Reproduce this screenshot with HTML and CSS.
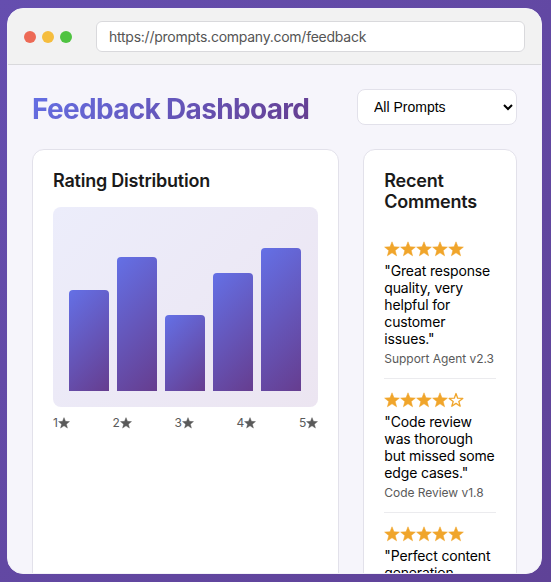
FILE: index.html
```html
<!DOCTYPE html>
<html lang="en">
<head>
<meta charset="utf-8">
<title>Feedback Dashboard</title>
<link rel="stylesheet" href="styles.css">
</head>
<body>
<svg class="defs" aria-hidden="true">
  <symbol id="star" viewBox="0 0 16 16"><path d="M8 .8 10 5.8 15.4 6.1 11.2 9.5 12.6 14.8 8 11.8 3.4 14.8 4.8 9.5 .6 6.1 6 5.8Z" fill="currentColor" stroke="currentColor" stroke-width=".5" stroke-linejoin="round"/></symbol>
  <symbol id="star-empty" viewBox="0 0 16 16"><path d="M8 1.5 9.7 6.2 14.8 6.4 10.8 9.5 12.2 14.2 8 11.4 3.8 14.2 5.2 9.5 1.2 6.4 6.3 6.2Z" fill="none" stroke="currentColor" stroke-width="1.3" stroke-linejoin="round"/></symbol>
</svg>
<div class="window">
  <header class="bar">
    <div class="dots"><i class="red"></i><i class="yellow"></i><i class="green"></i></div>
    <div class="url"><span>https://prompts.company.com/feedback</span></div>
  </header>
  <main class="content">
    <div class="top">
      <h1>Feedback Dashboard</h1>
      <select><option>All Prompts</option></select>
    </div>
    <div class="grid">
      <section class="card">
        <h3>Rating Distribution</h3>
        <div class="chart">
          <div class="col" style="height:60%"></div>
          <div class="col" style="height:80%"></div>
          <div class="col" style="height:45%"></div>
          <div class="col" style="height:70%"></div>
          <div class="col" style="height:85%"></div>
        </div>
        <div class="labels">
          <span>1<svg><use href="#star"/></svg></span>
          <span>2<svg><use href="#star"/></svg></span>
          <span>3<svg><use href="#star"/></svg></span>
          <span>4<svg><use href="#star"/></svg></span>
          <span>5<svg><use href="#star"/></svg></span>
        </div>
      </section>
      <section class="card">
        <h3>Recent Comments</h3>
        <article class="comment">
          <div class="stars"><svg><use href="#star"/></svg><svg><use href="#star"/></svg><svg><use href="#star"/></svg><svg><use href="#star"/></svg><svg><use href="#star"/></svg></div>
          <p>"Great response<br>quality, very<br>helpful for<br>customer<br>issues."</p>
          <small>Support Agent v2.3</small>
        </article>
        <article class="comment">
          <div class="stars"><svg><use href="#star"/></svg><svg><use href="#star"/></svg><svg><use href="#star"/></svg><svg><use href="#star"/></svg><svg><use href="#star-empty"/></svg></div>
          <p>"Code review<br>was thorough<br>but missed some<br>edge cases."</p>
          <small>Code Review v1.8</small>
        </article>
        <article class="comment">
          <div class="stars"><svg><use href="#star"/></svg><svg><use href="#star"/></svg><svg><use href="#star"/></svg><svg><use href="#star"/></svg><svg><use href="#star"/></svg></div>
          <p>"Perfect content<br>generation</p>
        </article>
      </section>
    </div>
  </main>
</div>
</body>
</html>
```
FILE: styles.css
```css
* { box-sizing: border-box; margin: 0; padding: 0; }
body {
  height: 582px;
  padding: 8px 9px 8px 7px;
  overflow: hidden;
  background: linear-gradient(135deg, #654eaf, #5f4297);
  font-family: Inter, "Liberation Sans", sans-serif;
}
.defs { display: none; }
.window {
  height: 566px;
  overflow: hidden;
  border: 1px solid #f3f2f8;
  border-radius: 16px;
  background: #f6f5fb;
}
.bar {
  display: flex;
  align-items: center;
  height: 56px;
  padding: 12px 16px;
  background: #f2f2f2;
  border-bottom: 1px solid #d9d9dc;
}
.dots { display: flex; gap: 6px; width: 72px; }
.dots i { width: 12px; height: 12px; border-radius: 50%; }
.red { background: #ed6a56; }
.yellow { background: #f5bd3e; }
.green { background: #4fc341; }
.url {
  flex: 1;
  height: 31px;
  padding: 0 12px;
  border: 1px solid #d9d9dc;
  border-radius: 6px;
  background: #fff;
  color: #555;
  font-size: 14px;
  line-height: 30px;
  letter-spacing: -0.25px;
}
.content { padding: 24px; }
.top { display: flex; justify-content: space-between; align-items: center; height: 36px; margin-bottom: 24px; }
h1 {
  padding-top: 3px;
  font-size: 28px;
  line-height: 34px;
  font-weight: 700;
  letter-spacing: -0.68px;
  white-space: nowrap;
  color: transparent;
  background: linear-gradient(135deg, #6470e6, #663d8f);
  background-clip: text;
  -webkit-background-clip: text;
}
select {
  width: 160px;
  height: 36px;
  padding: 0 0 0 12px;
  border: 1px solid #e2e1ea;
  border-radius: 8px;
  background: #fff;
  color: #000;
  font: 14px "Liberation Sans", sans-serif;
}
.grid { display: grid; grid-template-columns: 2fr 1fr; gap: 24px; }
.card {
  min-width: 0;
  height: 620px;
  padding: 20px;
  border: 1px solid #e2e1ea;
  border-radius: 12px;
  background: #fff;
}
h3 { margin-bottom: 16px; color: #1a1a1a; font-size: 18px; line-height: 21px; font-weight: 600; letter-spacing: -0.22px; }
.chart {
  display: flex;
  align-items: flex-end;
  gap: 8px;
  height: 200px;
  padding: 16px;
  border-radius: 8px;
  background: linear-gradient(135deg, #ecedfb, #ece5f1);
}
.col { width: 40px; border-radius: 4px 4px 0 0; background: linear-gradient(135deg, #6470e6, #663d8f); }
.labels { display: flex; justify-content: space-between; margin-top: 8px; color: #5a5a5a; font-size: 12px; line-height: 15px; }
.labels span { display: flex; align-items: center; }
.labels svg { width: 12px; height: 12px; }
.comment { padding: 13px 0 12px; border-bottom: 1px solid #ebebee; }
.stars { display: flex; height: 17px; margin-bottom: 4px; color: #f0a52b; }
.stars svg { width: 16px; height: 16px; }
.comment p { color: #000; font-size: 14px; line-height: 17px; letter-spacing: -0.16px; white-space: nowrap; }
.comment small { display: block; margin-top: 5px; color: #5a5a5a; font-size: 12px; line-height: 14px; letter-spacing: -0.04px; white-space: nowrap; }
```
